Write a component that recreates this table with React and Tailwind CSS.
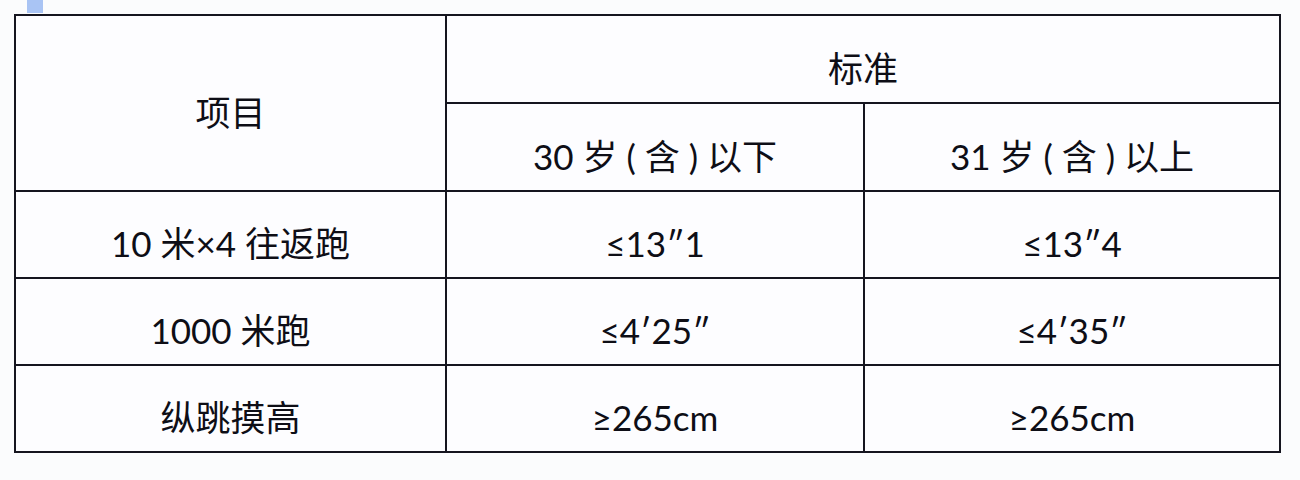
export default function App() {
  const rows = [
    ['10 米×4 往返跑', '≤13″1', '≤13″4'],
    ['1000 米跑', '≤4′25″', '≤4′35″'],
    ['纵跳摸高', '≥265cm', '≥265cm'],
  ]
  const cell = 'border-2 border-[#15151f] text-center align-middle pt-[18px] leading-none'
  return (
    <div className="relative w-[1300px] h-[480px] bg-[#fbfcfd] font-['Lato','Noto_Sans_CJK_SC',sans-serif] text-[35px] text-[#0e0e16]">
      <div className="absolute left-[27px] top-0 w-[16px] h-[13px] bg-[#a9c4f4]" />
      <div className="pt-[14px] pl-[14px]">
        <table className="border-collapse bg-[#fdfdff] table-fixed w-[1265px]">
          <colgroup>
            <col className="w-[431px]" />
            <col className="w-[418px]" />
            <col className="w-[416px]" />
          </colgroup>
          <tbody>
            <tr className="h-[88px]">
              <td rowSpan={2} className={cell}>项目</td>
              <td colSpan={2} className={cell}>标准</td>
            </tr>
            <tr className="h-[88px]">
              <td className={cell}>30 岁 ( 含 ) 以下</td>
              <td className={cell}>31 岁 ( 含 ) 以上</td>
            </tr>
            {rows.map((r) => (
              <tr key={r[0]} className="h-[87px]">
                {r.map((t, i) => (
                  <td key={i} className={cell}>{t}</td>
                ))}
              </tr>
            ))}
          </tbody>
        </table>
      </div>
    </div>
  )
}
